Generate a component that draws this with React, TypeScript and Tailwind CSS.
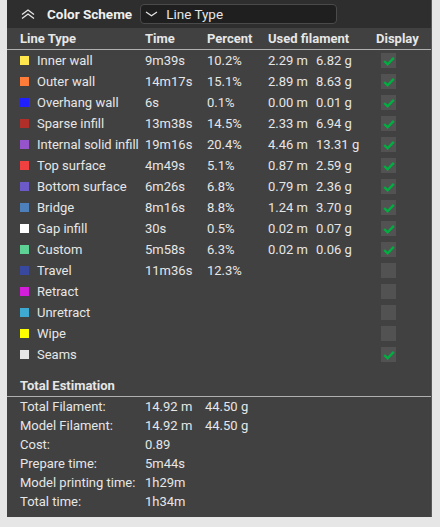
type Row = {
  name: string;
  color: string;
  time?: string;
  percent?: string;
  meters?: string;
  grams?: string;
  shown: boolean;
};

const rows: Row[] = [
  { name: "Inner wall", color: "#ffe64d", time: "9m39s", percent: "10.2%", meters: "2.29 m", grams: "6.82 g", shown: true },
  { name: "Outer wall", color: "#ff7d38", time: "14m17s", percent: "15.1%", meters: "2.89 m", grams: "8.63 g", shown: true },
  { name: "Overhang wall", color: "#1f1fff", time: "6s", percent: "0.1%", meters: "0.00 m", grams: "0.01 g", shown: true },
  { name: "Sparse infill", color: "#b03029", time: "13m38s", percent: "14.5%", meters: "2.33 m", grams: "6.94 g", shown: true },
  { name: "Internal solid infill", color: "#9654cc", time: "19m16s", percent: "20.4%", meters: "4.46 m", grams: "13.31 g", shown: true },
  { name: "Top surface", color: "#f04040", time: "4m49s", percent: "5.1%", meters: "0.87 m", grams: "2.59 g", shown: true },
  { name: "Bottom surface", color: "#6b5ac8", time: "6m26s", percent: "6.8%", meters: "0.79 m", grams: "2.36 g", shown: true },
  { name: "Bridge", color: "#4d80ba", time: "8m16s", percent: "8.8%", meters: "1.24 m", grams: "3.70 g", shown: true },
  { name: "Gap infill", color: "#ffffff", time: "30s", percent: "0.5%", meters: "0.02 m", grams: "0.07 g", shown: true },
  { name: "Custom", color: "#5ed194", time: "5m58s", percent: "6.3%", meters: "0.02 m", grams: "0.06 g", shown: true },
  { name: "Travel", color: "#38489e", time: "11m36s", percent: "12.3%", shown: false },
  { name: "Retract", color: "#d21ed8", shown: false },
  { name: "Unretract", color: "#3eaad2", shown: false },
  { name: "Wipe", color: "#ffff00", shown: false },
  { name: "Seams", color: "#e6e6e6", shown: true },
];

const totals = [
  { label: "Total Filament:", value: "14.92 m", extra: "44.50 g" },
  { label: "Model Filament:", value: "14.92 m", extra: "44.50 g" },
  { label: "Cost:", value: "0.89" },
  { label: "Prepare time:", value: "5m44s" },
  { label: "Model printing time:", value: "1h29m" },
  { label: "Total time:", value: "1h34m" },
];

function Check({ on }: { on: boolean }) {
  return (
    <span className="w-[15px] h-[15px] bg-[#525252] flex items-center justify-center">
      {on && (
        <svg width="12" height="10" viewBox="0 0 12 10">
          <path d="M1.2 5 L4.6 8.3 L10.8 1.8" fill="none" stroke="#00ae42" strokeWidth="2.4" />
        </svg>
      )}
    </span>
  );
}

export default function App() {
  return (
    <div className="w-[440px] h-[527px] bg-[#e6e6e6] pl-[7px] pr-[8px] pb-[10px] text-[13px] text-[#e6e6e6] font-['Roboto','Inter',sans-serif]">
      <div className="h-full bg-[#414141] border-r border-[#5a5a5a] flex flex-col">
        <div className="h-[28px] bg-[#2e2e2e] flex items-center pl-[13px]">
          <svg width="14" height="10" viewBox="0 0 14 10" className="ml-[1px]">
            <path d="M1 5.5 L7 1 L13 5.5 M1 9.5 L7 5 L13 9.5" fill="none" stroke="#e6e6e6" strokeWidth="1.3" />
          </svg>
          <span className="ml-[12px] font-bold text-[#f0f0f0] text-[13.5px]">Color Scheme</span>
          <div className="ml-[8px] w-[197px] h-[20px] bg-[#1f1f1f] border border-[#4a4a4a] rounded-[4px] flex items-center pl-[4px]">
            <svg width="13" height="6" viewBox="0 0 13 6">
              <path d="M1 1 L6.5 4.8 L12 1" fill="none" stroke="#e6e6e6" strokeWidth="1.2" />
            </svg>
            <span className="ml-[8px] text-[13.5px]">Line Type</span>
          </div>
        </div>

        <div className="h-[21px] flex items-center pl-[13px] font-bold border-b border-[#b0b0b0] box-content">
          <span className="w-[125px]">Line Type</span>
          <span className="w-[62px]">Time</span>
          <span className="w-[61px]">Percent</span>
          <span className="w-[108px]">Used filament</span>
          <span>Display</span>
        </div>

        <div>
          {rows.map((r) => (
            <div key={r.name} className="h-[21px] flex items-center pl-[13px]">
              <span className="w-[17px] flex">
                <span className="w-[9px] h-[9px]" style={{ backgroundColor: r.color }} />
              </span>
              <span className="w-[108px] whitespace-nowrap">{r.name}</span>
              <span className="w-[62px]">{r.time}</span>
              <span className="w-[61px]">{r.percent}</span>
              <span className="w-[48px]">{r.meters}</span>
              <span className="w-[65px]">{r.grams}</span>
              <Check on={r.shown} />
            </div>
          ))}
        </div>

        <div className="mt-[10px] h-[21px] flex items-center pl-[13px] font-bold border-b border-[#b0b0b0] box-content">
          Total Estimation
        </div>
        <div>
          {totals.map((t) => (
            <div key={t.label} className="h-[19px] flex items-center pl-[13px]">
              <span className="w-[125px] whitespace-nowrap">{t.label}</span>
              <span className="w-[60px]">{t.value}</span>
              <span>{t.extra}</span>
            </div>
          ))}
        </div>
      </div>
    </div>
  );
}
